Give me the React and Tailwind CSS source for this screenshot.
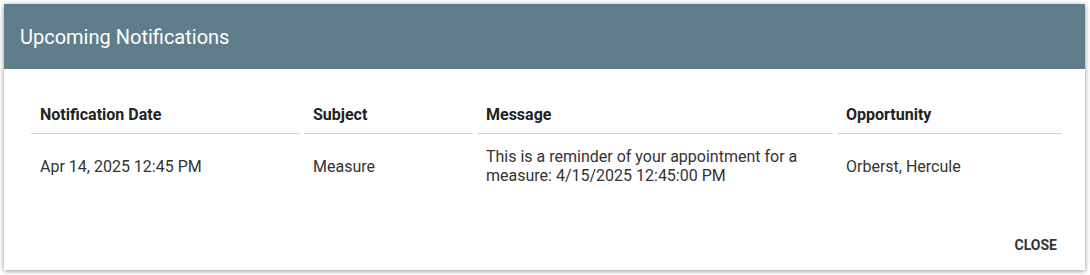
export default function App() {
  const columns = ['Notification Date', 'Subject', 'Message', 'Opportunity'];
  const row = [
    'Apr 14, 2025 12:45 PM',
    'Measure',
    'This is a reminder of your appointment for a measure: 4/15/2025 12:45:00 PM',
    'Orberst, Hercule',
  ];

  return (
    <div className="w-[1090px] h-[275px] bg-white pl-1 pt-1" style={{ fontFamily: 'Roboto, "Liberation Sans", sans-serif' }}>
      <div className="w-[1081px] h-[266px] bg-white shadow-[0_1px_5px_rgba(0,0,0,0.45)] flex flex-col">
        <div className="h-[65px] bg-[#607d8b] flex items-center px-4 shrink-0">
          <h2 className="text-white text-[20px] leading-none">Upcoming Notifications</h2>
        </div>

        <div className="px-[27px] pt-[27px]">
          <div className="grid grid-cols-[269px_169px_356px_225px] gap-x-1">
            {columns.map((c) => (
              <div key={c} className="h-[38px] flex items-center px-[9px] border-b border-[#d4d4d4] text-[16px] font-bold text-[#222]">
                {c}
              </div>
            ))}
            {row.map((v, i) => (
              <div key={i} className="h-[64px] flex items-center px-[9px] text-[16px] leading-[19px] text-[#333]">
                {v}
              </div>
            ))}
          </div>
        </div>

        <div className="flex-1 flex items-end justify-end px-[28px] pb-[14px]">
          <button className="text-[14px] font-bold text-[#333] uppercase">Close</button>
        </div>
      </div>
    </div>
  );
}
